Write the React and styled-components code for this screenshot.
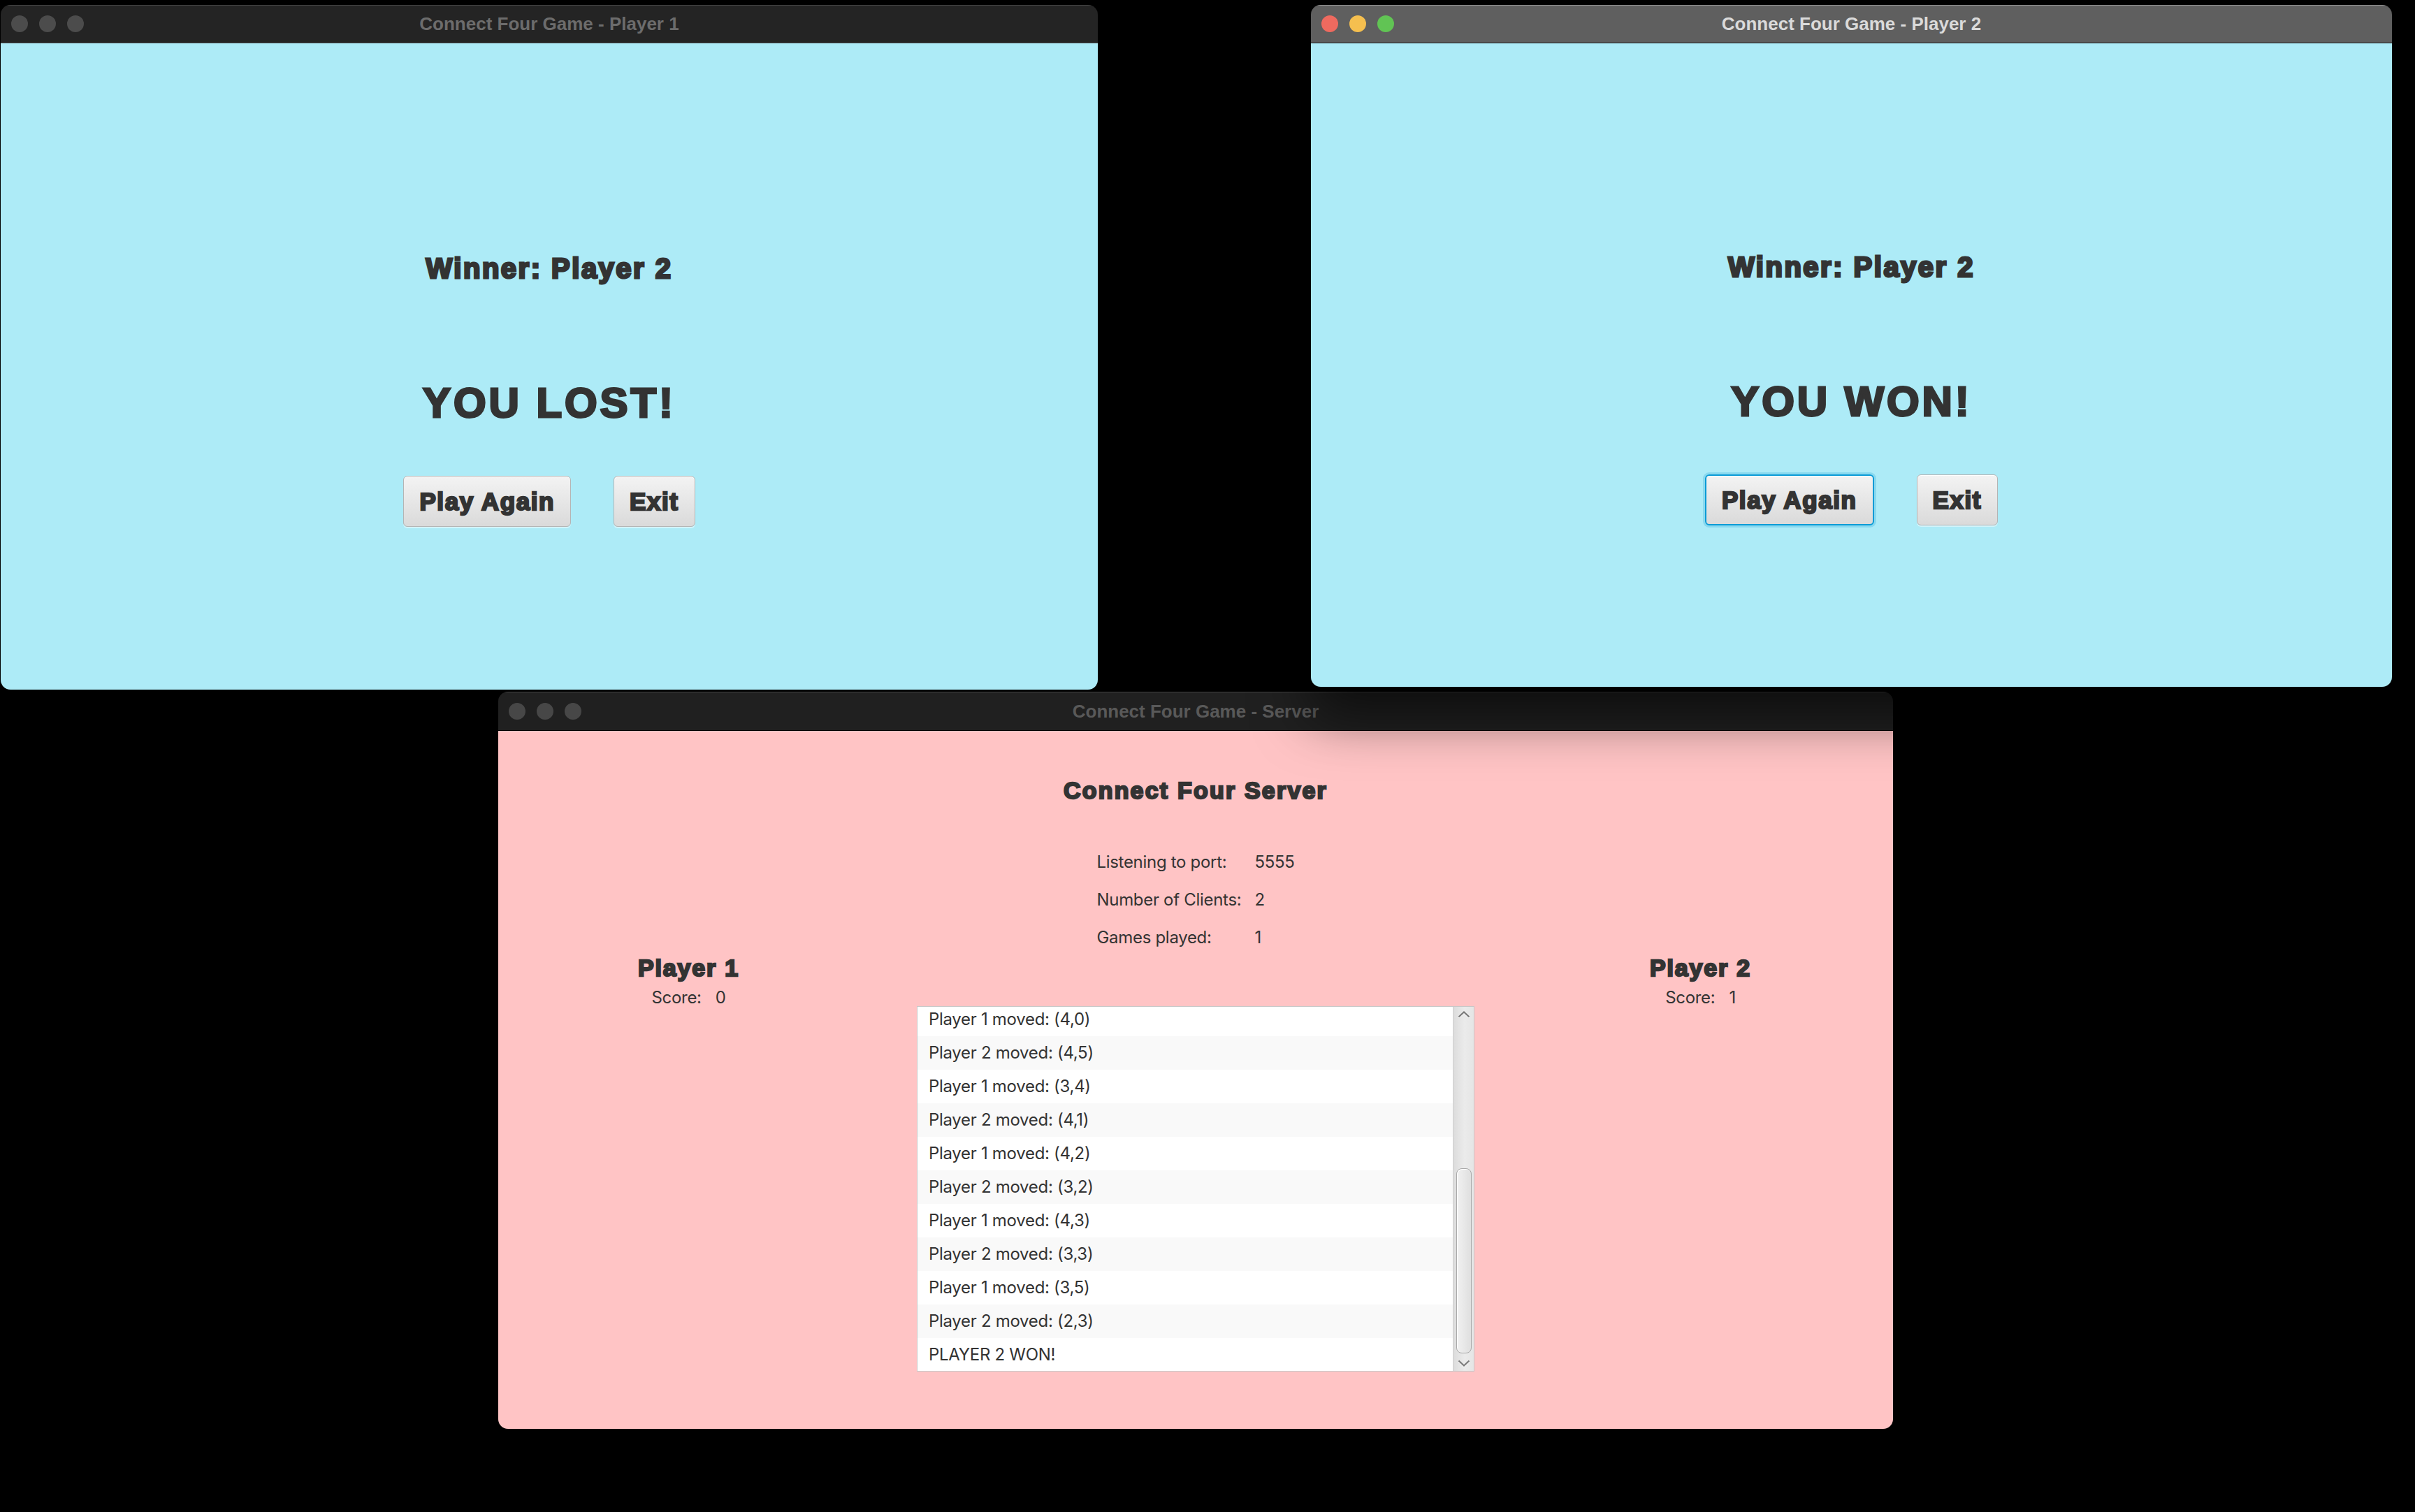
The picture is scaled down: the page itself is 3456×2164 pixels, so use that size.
import React from 'react';
import styled, { createGlobalStyle } from 'styled-components';

const GlobalStyle = createGlobalStyle`
  *, *::before, *::after { box-sizing: border-box; }
  html, body { margin: 0; padding: 0; background: #000; }
  body {
    width: 3456px;
    height: 2164px;
    overflow: hidden;
    font-family: "Liberation Sans", Arial, sans-serif;
  }
`;

const Desktop = styled.div`
  position: relative;
  width: 3456px;
  height: 2164px;
  background: #000;
  overflow: hidden;
`;

const Window = styled.section`
  position: absolute;
  left: ${(p) => p.$x}px;
  top: ${(p) => p.$y}px;
  width: ${(p) => p.$w}px;
  height: ${(p) => p.$h}px;
  z-index: ${(p) => p.$z || 0};
  display: flex;
  flex-direction: column;
  border-radius: 14px;
  overflow: hidden;
  box-shadow: ${(p) => (p.$active ? '0 40px 80px rgba(0,0,0,0.6)' : 'none')};
`;

const TitleBar = styled.header`
  flex: none;
  height: ${(p) => p.$height || 56}px;
  display: grid;
  grid-template-columns: 1fr auto 1fr;
  align-items: center;
  padding: 0 15px;
  background: ${(p) => p.$bg};
  box-shadow: inset 0 1px 0 ${(p) => (p.$active ? 'rgba(255,255,255,0.35)' : 'rgba(255,255,255,0.16)')};
  border-bottom: 1px solid ${(p) => p.$sep};
`;

const Lights = styled.div`
  display: flex;
  gap: 16px;
  align-items: center;
`;

const Light = styled.span`
  width: 24px;
  height: 24px;
  border-radius: 50%;
  background: ${(p) => p.$color};
`;

const TitleText = styled.h1`
  margin: 0;
  font: 700 26px/30px "Liberation Sans", Arial, sans-serif;
  color: ${(p) => p.$color};
  white-space: nowrap;
`;

const GameBody = styled.main`
  flex: 1;
  background: #adebf7;
  color: #333;
  display: flex;
  flex-direction: column;
  align-items: center;
  padding-top: ${(p) => p.$top}px;
`;

const WinnerText = styled.h2`
  margin: 0;
  font: 700 40px/46px "Liberation Sans", Arial, sans-serif;
  letter-spacing: 2.5px;
  -webkit-text-stroke: 3px #333;
  white-space: nowrap;
`;

const ResultText = styled.h3`
  margin: 135px 0 0;
  font: 700 60px/70px "Liberation Sans", Arial, sans-serif;
  letter-spacing: 3.9px;
  -webkit-text-stroke: 3px #333;
  white-space: nowrap;
`;

const ButtonRow = styled.div`
  margin-top: 69px;
  display: flex;
  gap: 61px;
`;

const Button = styled.button`
  height: 73px;
  padding: 0 22px;
  font: 700 35px/41px "Liberation Sans", Arial, sans-serif;
  letter-spacing: 1.6px;
  -webkit-text-stroke: 2.4px #333;
  color: #333;
  border-radius: 6px;
  border: ${(p) => (p.$focused ? '2px solid #0a9bd6' : '1.5px solid #b4b4b4')};
  background: linear-gradient(#f3f3f3, #dadada);
  box-shadow: ${(p) =>
    p.$focused
      ? 'inset 0 1px 0 #fff, 0 0 0 3px rgba(10,155,214,0.22)'
      : 'inset 0 1px 0 #fff, 0 2px 0 rgba(255,255,255,0.45)'};
  white-space: nowrap;
`;

const ServerBody = styled.main`
  flex: 1;
  background: #ffc4c5;
  color: #333;
  display: grid;
  grid-template-columns: 1fr 798px 1fr;
`;

const SideColumn = styled.div`
  display: flex;
  flex-direction: column;
  align-items: center;
  padding-top: 319px;
  padding-left: ${(p) => (p.$side === 'right' ? 48 : 0)}px;
  padding-right: ${(p) => (p.$side === 'left' ? 54 : 0)}px;
`;

const PlayerName = styled.h3`
  margin: 0;
  font: 700 34px/40px "Liberation Sans", Arial, sans-serif;
  letter-spacing: 1.8px;
  -webkit-text-stroke: 2.4px #333;
  white-space: nowrap;
`;

const ScoreRow = styled.div`
  margin-top: 8px;
  display: flex;
  gap: 20px;
  font: 400 24px/30px Inter, "Liberation Sans", sans-serif;
  letter-spacing: -0.3px;
`;

const CenterColumn = styled.div`
  display: flex;
  flex-direction: column;
  align-items: center;
  padding-top: 65px;
`;

const ServerHeading = styled.h2`
  margin: 0;
  font: 700 34px/40px "Liberation Sans", Arial, sans-serif;
  letter-spacing: 2.2px;
  -webkit-text-stroke: 2.4px #333;
  white-space: nowrap;
`;

const Stats = styled.dl`
  margin: 68px 0 0;
  display: grid;
  grid-template-columns: auto auto;
  column-gap: 19px;
  row-gap: 24px;
  font: 400 24px/30px Inter, "Liberation Sans", sans-serif;
  letter-spacing: -0.3px;
  & > dt, & > dd { margin: 0; white-space: nowrap; }
`;

const LogList = styled.div`
  margin-top: 83px;
  width: 798px;
  height: 523px;
  border: 1px solid #c8c8c8;
  background: #fff;
  display: flex;
`;

const LogViewport = styled.div`
  flex: 1;
  overflow: hidden;
`;

const LogRows = styled.ul`
  list-style: none;
  margin: -6px 0 0;
  padding: 0;
`;

const LogRow = styled.li`
  height: 48px;
  padding-left: 16px;
  font: 400 24px/48px Inter, "Liberation Sans", sans-serif;
  letter-spacing: -0.3px;
  color: #333;
  background: ${(p) => (p.$alt ? '#f9f9f9' : '#fff')};
  white-space: nowrap;
`;

const ScrollBar = styled.div`
  flex: none;
  width: 30px;
  border-left: 1px solid #cfcfcf;
  background: linear-gradient(to right, #dcdcdc, #ebebeb 55%, #e5e5e5);
  display: flex;
  flex-direction: column;
`;

const ScrollArrow = styled.div`
  flex: none;
  height: 22px;
  display: flex;
  align-items: center;
  justify-content: center;
  & svg { filter: drop-shadow(0 1px 0 rgba(255,255,255,0.9)); }
`;

const ScrollTrack = styled.div`
  flex: 1;
  display: flex;
  flex-direction: column;
  justify-content: flex-end;
  padding: 0 3px 3px 4px;
`;

const ScrollThumb = styled.div`
  height: 265px;
  border: 1.5px solid #a9a9a9;
  border-radius: 8px;
  background: linear-gradient(to right, #f1f1f1, #dfdfdf);
  box-shadow: inset 1px 1px 0 #fff;
`;

const Chevron = ({ up }) => (
  <svg width="18" height="10" viewBox="0 0 18 10">
    <polyline
      points={up ? '1.5,8.5 9,1.5 16.5,8.5' : '1.5,1.5 9,8.5 16.5,1.5'}
      fill="none"
      stroke="#7a7a7a"
      strokeWidth="2.2"
    />
  </svg>
);

const ChromeBar = ({ title, active, bg, sep, textColor, lights, height }) => (
  <TitleBar $bg={bg} $sep={sep} $active={active} $height={height}>
    <Lights>
      {lights.map((c, i) => (
        <Light key={i} $color={c} />
      ))}
    </Lights>
    <TitleText $color={textColor}>{title}</TitleText>
    <span />
  </TitleBar>
);

const GameWindow = ({ x, y, w, h, z, title, active, result, focusPlay, top }) => (
  <Window $x={x} $y={y} $w={w} $h={h} $z={z} $active={active}>
    <ChromeBar
      title={title}
      active={active}
      bg={active ? '#5f5f5f' : '#242424'}
      sep={active ? '#161616' : '#4a4a4a'}
      textColor={active ? '#dadada' : '#6c6c6c'}
      lights={active ? ['#ee6a5f', '#f5bf4f', '#61c454'] : ['#4c4c4c', '#4c4c4c', '#4c4c4c']}
      height={55}
    />
    <GameBody $top={top}>
      <WinnerText>Winner: Player 2</WinnerText>
      <ResultText>{result}</ResultText>
      <ButtonRow>
        <Button $focused={focusPlay}>Play Again</Button>
        <Button>Exit</Button>
      </ButtonRow>
    </GameBody>
  </Window>
);

const moves = [
  'Player 1 moved: (4,0)',
  'Player 2 moved: (4,5)',
  'Player 1 moved: (3,4)',
  'Player 2 moved: (4,1)',
  'Player 1 moved: (4,2)',
  'Player 2 moved: (3,2)',
  'Player 1 moved: (4,3)',
  'Player 2 moved: (3,3)',
  'Player 1 moved: (3,5)',
  'Player 2 moved: (2,3)',
  'PLAYER 2 WON!',
];

const PlayerPanel = ({ side, name, score }) => (
  <SideColumn $side={side}>
    <PlayerName>{name}</PlayerName>
    <ScoreRow>
      <span>Score:</span>
      <span>{score}</span>
    </ScoreRow>
  </SideColumn>
);

const ServerWindow = () => (
  <Window $x={713} $y={990} $w={1996} $h={1055} $z={0}>
    <ChromeBar
      title="Connect Four Game - Server"
      bg="#202020"
      sep="#000"
      textColor="#595959"
      lights={['#474747', '#474747', '#474747']}
      height={56}
    />
    <ServerBody>
      <PlayerPanel side="left" name="Player 1" score="0" />
      <CenterColumn>
        <ServerHeading>Connect Four Server</ServerHeading>
        <Stats>
          <dt>Listening to port:</dt>
          <dd>5555</dd>
          <dt>Number of Clients:</dt>
          <dd>2</dd>
          <dt>Games played:</dt>
          <dd>1</dd>
        </Stats>
        <LogList>
          <LogViewport>
            <LogRows>
              {moves.map((m, i) => (
                <LogRow key={i} $alt={i % 2 === 1}>
                  {m}
                </LogRow>
              ))}
            </LogRows>
          </LogViewport>
          <ScrollBar>
            <ScrollArrow>
              <Chevron up />
            </ScrollArrow>
            <ScrollTrack>
              <ScrollThumb />
            </ScrollTrack>
            <ScrollArrow>
              <Chevron />
            </ScrollArrow>
          </ScrollBar>
        </LogList>
      </CenterColumn>
      <PlayerPanel side="right" name="Player 2" score="1" />
    </ServerBody>
  </Window>
);

export default function App() {
  return (
    <Desktop>
      <GlobalStyle />
      <GameWindow
        x={1}
        y={7}
        w={1570}
        h={980}
        z={1}
        title="Connect Four Game - Player 1"
        result="YOU LOST!"
        top={299}
      />
      <GameWindow
        x={1876}
        y={7}
        w={1547}
        h={976}
        z={2}
        active
        focusPlay
        title="Connect Four Game - Player 2"
        result="YOU WON!"
        top={297}
      />
      <ServerWindow />
    </Desktop>
  );
}
